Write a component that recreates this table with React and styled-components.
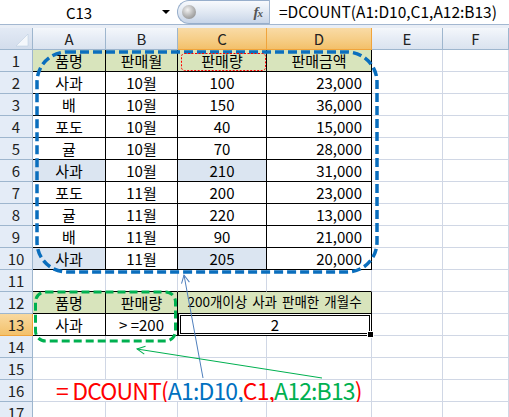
import styled, { createGlobalStyle } from 'styled-components';

const GlobalStyle = createGlobalStyle`
  html, body {
    margin: 0;
    padding: 0;
    background: #fff;
    overflow: hidden;
  }
  body {
    font-family: 'Noto Sans CJK KR', 'Noto Sans', sans-serif;
    color: #000;
  }
`;

const GREEN = '#d8e4bc';
const BLUE = '#dbe5f1';
const GRID = '#d0d7e5';
const HEAD_LINE = '#9eb6ce';

const Page = styled.div`
	position: relative;
	width: 509px;
	height: 417px;
	overflow: hidden;
`;

const FormulaBar = styled.div`
	display: flex;
	height: 25px;
	box-sizing: border-box;
	border-bottom: 1px solid #a3b7d0;
`;

const NameBox = styled.div`
	display: flex;
	align-items: center;
	width: 177px;
	font-size: 15px;
	line-height: 1;
`;

const NameText = styled.span`
	flex: 0 0 158px;
	text-align: center;
`;

const DropArrow = styled.span`
	width: 0;
	height: 0;
	margin-left: 4px;
	border-left: 4px solid transparent;
	border-right: 4px solid transparent;
	border-top: 4px solid #000;
`;

const FxPill = styled.div`
	display: flex;
	align-items: center;
	justify-content: space-between;
	width: 92px;
	box-sizing: border-box;
	padding: 0 7px 0 4px;
	border: 1px solid #97aecb;
	border-right: none;
	border-radius: 12px 0 0 12px;
	background: linear-gradient(#f8fafd, #dfe7f2 55%, #c8d5e8);
`;

const Knob = styled.span`
	width: 14px;
	height: 14px;
	border-radius: 50%;
	background: radial-gradient(circle at 40% 35%, #f2f2f2, #b5b5b5 50%, #7f7f7f);
`;

const Fx = styled.span`
	font-family: 'Liberation Serif', serif;
	font-style: italic;
	font-weight: bold;
	font-size: 15px;
	color: #555;
	letter-spacing: -1px;

	small {
		font-size: 11px;
	}
`;

const FormulaInput = styled.div`
	flex: 1;
	display: flex;
	align-items: center;
	padding-left: 9px;
	border-left: 1px solid #a3b7d0;
	font-size: 15.5px;
	line-height: 1;
`;

const Band = styled.div`
	height: 3px;
	background: #e9eef6;
`;

const Sheet = styled.div`
	display: grid;
	grid-template-columns: 33px 73px 72px 89px 105px 71px 66px;
	grid-auto-rows: 22px;
`;

const Corner = styled.div`
	box-sizing: border-box;
	border-right: 1px solid ${HEAD_LINE};
	border-bottom: 1px solid ${HEAD_LINE};
	background: linear-gradient(#e3eaf5, #d3ddec);
`;

const ColHead = styled.div`
	display: flex;
	align-items: center;
	justify-content: center;
	box-sizing: border-box;
	font-size: 15px;
	line-height: 1;
	color: #222;
	border-right: 1px solid ${p => (p.$active ? '#f0a43c' : HEAD_LINE)};
	border-bottom: 1px solid ${p => (p.$active ? '#f0a43c' : HEAD_LINE)};
	background: ${p =>
		p.$active
			? 'linear-gradient(#f9dba6, #f6cf8a 50%, #f3c06a)'
			: 'linear-gradient(#f4f7fb, #e6ecf5 50%, #dae3ef)'};
`;

const RowHead = styled.div`
	display: flex;
	align-items: center;
	justify-content: center;
	box-sizing: border-box;
	font-size: 15px;
	line-height: 1;
	color: #222;
	border-right: 1px solid ${p => (p.$active ? '#f0a43c' : HEAD_LINE)};
	border-bottom: 1px solid ${p => (p.$active ? '#f0a43c' : HEAD_LINE)};
	background: ${p => (p.$active ? 'linear-gradient(#f9d9a0, #f3c16b)' : '#e4ecf7')};
`;

const Cell = styled.div`
	grid-column: span ${p => p.$span || 1};
	display: flex;
	align-items: center;
	justify-content: ${p => (p.$align === 'right' ? 'flex-end' : 'center')};
	box-sizing: border-box;
	padding: 0 ${p => (p.$align === 'right' ? '9px' : '2px')} 1px 2px;
	font-size: ${p => (p.$small ? '13.5px' : '15px')};
	word-spacing: ${p => (p.$small ? '2px' : 'normal')};
	line-height: 1;
	white-space: pre;
	background: ${p => p.$fill || '#fff'};
	border-right: 1px solid ${p => (p.$boxed ? '#000' : GRID)};
	border-bottom: 1px solid ${p => (p.$boxed || p.$under ? '#000' : GRID)};
`;

const SelectedCell = styled(Cell)`
	position: relative;
	border: 1px solid #000;
	border-top: none;
	box-shadow: inset 0 0 0 1px #fff, inset 0 0 0 2px #000;
`;

const FillHandle = styled.span`
	position: absolute;
	right: -3px;
	bottom: -3px;
	width: 5px;
	height: 5px;
	background: #000;
	border: 1px solid #fff;
`;

const FormulaCell = styled(Cell)`
	justify-content: flex-start;
	padding-left: 23px;
	padding-bottom: 0;
	font-size: 23px;
	letter-spacing: -0.85px;
`;

const Part = styled.span`
	color: ${p => p.$c};
`;

const Overlay = styled.svg`
	position: absolute;
	top: 0;
	left: 0;
	pointer-events: none;
`;

const sales = [
	['사과', '10월', 100, '23,000'],
	['배', '10월', 150, '36,000'],
	['포도', '10월', 40, '15,000'],
	['귤', '10월', 70, '28,000'],
	['사과', '10월', 210, '31,000'],
	['포도', '11월', 200, '23,000'],
	['귤', '11월', 220, '13,000'],
	['배', '11월', 90, '21,000'],
	['사과', '11월', 205, '20,000'],
];

const empty = n => Array.from({ length: n }, () => ({}));
const hdr = t => ({ t, boxed: true, fill: GREEN });

const buildRows = () => {
	const rows = [];
	rows.push([hdr('품명'), hdr('판매월'), hdr('판매량'), hdr('판매금액'), ...empty(2)]);
	sales.forEach(([name, month, qty, amount]) => {
		const hit = name === '사과' && qty >= 200;
		rows.push([
			{ t: name, boxed: true, fill: hit ? BLUE : null },
			{ t: month, boxed: true },
			{ t: qty, boxed: true, fill: hit ? BLUE : null },
			{ t: amount, boxed: true, align: 'right' },
			...empty(2),
		]);
	});
	rows.push([{ under: true }, { under: true }, { under: true }, { under: true }, ...empty(2)]);
	rows.push([
		hdr('품명'),
		hdr('판매량'),
		{ t: '200개이상 사과 판매한 개월수', boxed: true, fill: GREEN, span: 2, small: true },
		...empty(2),
	]);
	rows.push([{ t: '사과', boxed: true }, { t: '> =200', boxed: true }, { t: '2', span: 2, selected: true }, ...empty(2)]);
	rows.push(empty(6));
	rows.push(empty(6));
	rows.push([{ formula: true, span: 4 }, ...empty(2)]);
	rows.push(empty(6));
	return rows;
};

const formulaParts = [
	['= DCOUNT(', '#ff0000'],
	['A1:D10,', '#0070c0'],
	['C1,', '#ff0000'],
	['A12:B13', '#00b050'],
	[')', '#ff0000'],
];

const renderCell = (c, key) => {
	if (c.selected) {
		return (
			<SelectedCell key={key} $span={c.span}>
				{c.t}
				<FillHandle />
			</SelectedCell>
		);
	}
	if (c.formula) {
		return (
			<FormulaCell key={key} $span={c.span}>
				{formulaParts.map(([t, col]) => (
					<Part key={t} $c={col}>
						{t}
					</Part>
				))}
			</FormulaCell>
		);
	}
	return (
		<Cell
			key={key}
			$span={c.span}
			$boxed={c.boxed}
			$under={c.under}
			$fill={c.fill}
			$align={c.align}
			$small={c.small}
		>
			{c.t}
		</Cell>
	);
};

const Annotations = () => (
	<Overlay width="509" height="417" viewBox="0 0 509 417">
		<defs>
			<marker id="headBlue" markerUnits="userSpaceOnUse" markerWidth="12" markerHeight="12" refX="9" refY="5" orient="auto">
				<path d="M1,1 L9,5 L1,9" fill="none" stroke="#4f7fbd" strokeWidth="1" />
			</marker>
			<marker id="headGreen" markerUnits="userSpaceOnUse" markerWidth="12" markerHeight="12" refX="9" refY="5" orient="auto">
				<path d="M1,1 L9,5 L1,9" fill="none" stroke="#00b050" strokeWidth="1" />
			</marker>
		</defs>
		<rect x="37" y="52" width="340" height="220" rx="30" fill="none" stroke="#0a6ebd" strokeWidth="3.5" strokeDasharray="9 4" />
		<rect x="181.5" y="53.5" width="84" height="17" rx="3" fill="none" stroke="#ff0000" strokeWidth="1" strokeDasharray="2 1.5" />
		<rect x="35.5" y="292" width="140" height="49" rx="10" fill="none" stroke="#00b050" strokeWidth="3" strokeDasharray="8 4" />
		<line x1="203" y1="378" x2="184" y2="275" stroke="#4f7fbd" strokeWidth="1" markerEnd="url(#headBlue)" />
		<line x1="322" y1="378" x2="137" y2="349" stroke="#00b050" strokeWidth="1" markerEnd="url(#headGreen)" />
	</Overlay>
);

const columns = ['A', 'B', 'C', 'D', 'E', 'F'];

const App = () => {
	const rows = buildRows();

	return (
		<Page>
			<GlobalStyle />
			<FormulaBar>
				<NameBox>
					<NameText>C13</NameText>
					<DropArrow />
				</NameBox>
				<FxPill>
					<Knob />
					<Fx>
						f<small>x</small>
					</Fx>
				</FxPill>
				<FormulaInput>=DCOUNT(A1:D10,C1,A12:B13)</FormulaInput>
			</FormulaBar>
			<Band />
			<Sheet>
				<Corner>
					<svg width="32" height="21" viewBox="0 0 32 21">
						<polygon points="28,6 28,18 16,18" fill="#f4f7fb" stroke="#b7c8dd" strokeWidth="0.5" />
					</svg>
				</Corner>
				{columns.map(c => (
					<ColHead key={c} $active={c === 'C' || c === 'D'}>
						{c}
					</ColHead>
				))}
				{rows.map((cells, i) => [
					<RowHead key={`h${i}`} $active={i + 1 === 13}>
						{i + 1}
					</RowHead>,
					...cells.map((c, j) => renderCell(c, `${i}-${j}`)),
				])}
			</Sheet>
			<Annotations />
		</Page>
	);
};

export default App;
